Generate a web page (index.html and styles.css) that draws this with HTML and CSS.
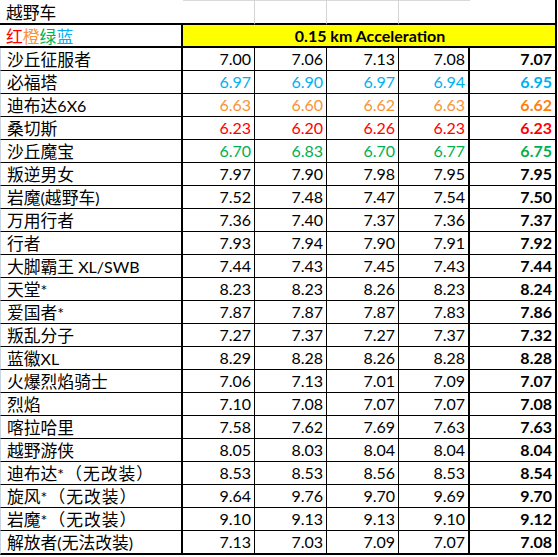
FILE: index.html
```html
<!DOCTYPE html>
<html lang="zh">
<head>
  <meta charset="UTF-8" />
  <title>越野车 0.15 km Acceleration</title>
  <link rel="stylesheet" href="styles.css">
</head>
<body>
  <table class="sheet">
    <colgroup>
      <col class="c-name">
      <col class="c-run">
      <col class="c-run">
      <col class="c-run">
      <col class="c-run4">
      <col class="c-avg">
    </colgroup>
    <tr class="row-title">
      <td class="name">越野车</td>
      <td class="grid"></td>
      <td class="grid"></td>
      <td class="grid"></td>
      <td class="grid last"></td>
      <td class="avg"></td>
    </tr>
    <tr class="row-head">
      <td class="name legend"><span class="red">红</span><span class="orange">橙</span><span class="green">绿</span><span class="blue">蓝</span></td>
      <td class="test" colspan="5">0.15 km Acceleration</td>
    </tr>
    <tr><td class="name">沙丘征服者</td><td>7.00</td><td>7.06</td><td>7.13</td><td class="last">7.08</td><td class="avg">7.07</td></tr>
    <tr class="blue"><td class="name">必福塔</td><td>6.97</td><td>6.90</td><td>6.97</td><td class="last">6.94</td><td class="avg">6.95</td></tr>
    <tr class="orange"><td class="name">迪布达<span class="lat">6X6</span></td><td>6.63</td><td>6.60</td><td>6.62</td><td class="last">6.63</td><td class="avg">6.62</td></tr>
    <tr class="red"><td class="name">桑切斯</td><td>6.23</td><td>6.20</td><td>6.26</td><td class="last">6.23</td><td class="avg">6.23</td></tr>
    <tr class="green"><td class="name">沙丘魔宝</td><td>6.70</td><td>6.83</td><td>6.70</td><td class="last">6.77</td><td class="avg">6.75</td></tr>
    <tr><td class="name">叛逆男女</td><td>7.97</td><td>7.90</td><td>7.98</td><td class="last">7.95</td><td class="avg">7.95</td></tr>
    <tr><td class="name">岩魔<span class="lat">(</span>越野车<span class="lat">)</span></td><td>7.52</td><td>7.48</td><td>7.47</td><td class="last">7.54</td><td class="avg">7.50</td></tr>
    <tr><td class="name">万用行者</td><td>7.36</td><td>7.40</td><td>7.37</td><td class="last">7.36</td><td class="avg">7.37</td></tr>
    <tr><td class="name">行者</td><td>7.93</td><td>7.94</td><td>7.90</td><td class="last">7.91</td><td class="avg">7.92</td></tr>
    <tr><td class="name">大脚霸王<span class="lat"> XL/SWB</span></td><td>7.44</td><td>7.43</td><td>7.45</td><td class="last">7.43</td><td class="avg">7.44</td></tr>
    <tr><td class="name">天堂<span class="lat">*</span></td><td>8.23</td><td>8.23</td><td>8.26</td><td class="last">8.23</td><td class="avg">8.24</td></tr>
    <tr><td class="name">爱国者<span class="lat">*</span></td><td>7.87</td><td>7.87</td><td>7.87</td><td class="last">7.83</td><td class="avg">7.86</td></tr>
    <tr><td class="name">叛乱分子</td><td>7.27</td><td>7.37</td><td>7.27</td><td class="last">7.37</td><td class="avg">7.32</td></tr>
    <tr><td class="name">蓝徽<span class="lat">XL</span></td><td>8.29</td><td>8.28</td><td>8.26</td><td class="last">8.28</td><td class="avg">8.28</td></tr>
    <tr><td class="name">火爆烈焰骑士</td><td>7.06</td><td>7.13</td><td>7.01</td><td class="last">7.09</td><td class="avg">7.07</td></tr>
    <tr><td class="name">烈焰</td><td>7.10</td><td>7.08</td><td>7.07</td><td class="last">7.07</td><td class="avg">7.08</td></tr>
    <tr><td class="name">喀拉哈里</td><td>7.58</td><td>7.62</td><td>7.69</td><td class="last">7.63</td><td class="avg">7.63</td></tr>
    <tr><td class="name">越野游侠</td><td>8.05</td><td>8.03</td><td>8.04</td><td class="last">8.04</td><td class="avg">8.04</td></tr>
    <tr><td class="name">迪布达<span class="lat">*</span><span class="note">（无改装）</span></td><td>8.53</td><td>8.53</td><td>8.56</td><td class="last">8.53</td><td class="avg">8.54</td></tr>
    <tr><td class="name">旋风<span class="lat">*</span><span class="note">（无改装）</span></td><td>9.64</td><td>9.76</td><td>9.70</td><td class="last">9.69</td><td class="avg">9.70</td></tr>
    <tr><td class="name">岩魔<span class="lat">*</span><span class="note">（无改装）</span></td><td>9.10</td><td>9.13</td><td>9.13</td><td class="last">9.10</td><td class="avg">9.12</td></tr>
    <tr class="row-end"><td class="name">解放者<span class="lat">(</span>无法改装<span class="lat">)</span></td><td>7.13</td><td>7.03</td><td>7.09</td><td class="last">7.07</td><td class="avg">7.08</td></tr>
  </table>
</body>
</html>
```

FILE: styles.css
```css
body {
  margin: 0;
  background: #ffffff;
  font-family: Lato, "Liberation Sans", "Noto Sans CJK SC", sans-serif;
  color: #000000;
}

.sheet {
  border-collapse: separate;
  border-spacing: 0;
  table-layout: fixed;
  width: 557px;
}

.c-name { width: 183px; }
.c-run { width: 72px; }
.c-run4 { width: 71px; }
.c-avg { width: 87px; }

.sheet tr {
  height: 23px;
}

.sheet tr.row-title {
  height: 25px;
}

.sheet tr.row-end {
  height: 24px;
}

.sheet td {
  box-sizing: border-box;
  padding: 0 3px 0 0;
  font-size: 16px;
  line-height: 20px;
  text-align: right;
  vertical-align: middle;
  white-space: nowrap;
  border-right: 1px solid #000;
  border-bottom: 1px solid #000;
}

.sheet td.name {
  text-align: left;
  padding: 0 0 0 6px;
  font-family: "Noto Sans CJK SC", sans-serif;
  font-size: 16.8px;
  border-left: 1px solid #c9d5e2;
  border-right: 2px solid #000;
}

.sheet td.name .lat {
  font-family: Lato, "Liberation Sans", sans-serif;
  font-size: 16px;
}

.sheet td.name .note {
  margin-left: 1px;
  letter-spacing: 1px;
}

.sheet td.last {
  border-right: 2px solid #000;
}

.sheet td.avg {
  font-weight: bold;
  border-right: 2px solid #000;
}

/* title row */
.row-title td {
  border-bottom: 2px solid #000;
}

.row-title td.name {
  border-left: none;
  border-right: none;
}

.row-title td.grid {
  border-top: 1px solid #d9d9d9;
  border-right: 1px solid #d4d4d4;
}

.row-title td.grid.last {
  border-right: none;
}

/* header row */
.row-head td {
  border-bottom: 2px solid #000;
}

.row-head td.name {
  border-left: none;
  border-right: 2px solid #000;
}

.sheet td.test {
  background: #ffff00;
  text-align: center;
  font-weight: bold;
  font-size: 16px;
  padding: 0 0 0 2px;
  border-right: 2px solid #000;
}

.row-end td {
  border-bottom: 2px solid #000;
}

/* Excel font colours */
.red, .red td { color: #ff0000; }
.orange, .orange td { color: #f99337; }
.green, .green td { color: #00b050; }
.blue, .blue td { color: #00b0f0; }

.red .name, .orange .name, .green .name, .blue .name {
  color: #000;
}

.legend .red { color: #ff0000; }
.legend .orange { color: #f99337; }
.legend .green { color: #00b050; }
.legend .blue { color: #00b0f0; }

.orange td.avg { color: #ff7f0e; }
```
